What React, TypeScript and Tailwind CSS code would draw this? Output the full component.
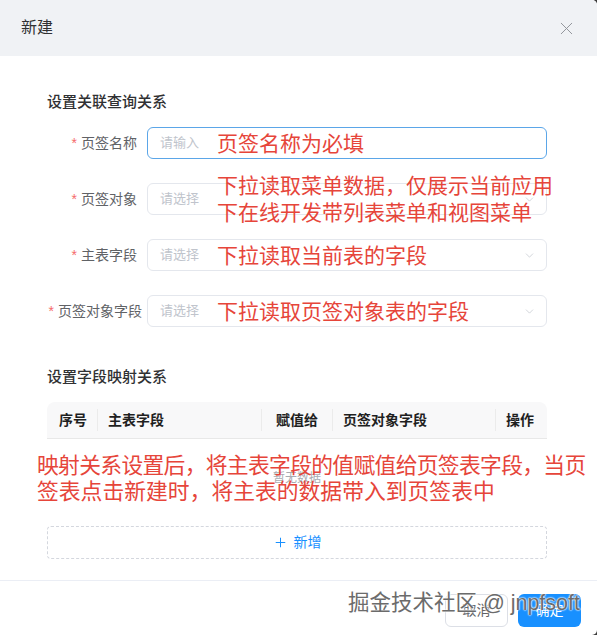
import { ChevronDown, Plus, X } from "lucide-react";

const rows = [
  { label: "页签名称", placeholder: "请输入", select: false, focus: true, note: ["页签名称为必填"] },
  {
    label: "页签对象",
    placeholder: "请选择",
    select: true,
    note: ["下拉读取菜单数据，仅展示当前应用", "下在线开发带列表菜单和视图菜单"],
  },
  { label: "主表字段", placeholder: "请选择", select: true, note: ["下拉读取当前表的字段"] },
  { label: "页签对象字段", placeholder: "请选择", select: true, note: ["下拉读取页签对象表的字段"] },
];

function FormRow({ row }: { row: (typeof rows)[number] }) {
  const long = row.label.length > 4;
  return (
    <div className="flex h-[32px] items-center">
      <div
        className={
          "flex w-[100px] shrink-0 items-center justify-end gap-[4px] whitespace-nowrap text-[14px] text-[#606266] " +
          (long ? "pr-[5px]" : "pr-[10px]")
        }
      >
        <span className="text-[#f56c6c]">*</span>
        <span>{row.label}</span>
      </div>
      <div
        className={
          "relative flex h-[32px] flex-1 items-center rounded-[6px] border pl-[12px] pr-[10px] " +
          (row.focus ? "border-[#5ba6e8]" : "border-[#e4e7ed]")
        }
      >
        <span className="flex-1 text-[13px] text-[#c0c4cc]">{row.placeholder}</span>
        {row.select && <ChevronDown size={13} strokeWidth={1.3} className="text-[#c0c4cc]" />}
        <div className="absolute left-[69px] top-1/2 -translate-y-1/2 text-[21px] leading-[27px] whitespace-nowrap text-[#e6453a]">
          {row.note.map((n) => (
            <div key={n}>{n}</div>
          ))}
        </div>
      </div>
    </div>
  );
}

export default function App() {
  return (
    <div className="relative h-[635px] w-[597px] bg-[#3c3c3c] font-['Liberation_Sans','Noto_Sans_CJK_SC',sans-serif]">
      <div className="flex h-full flex-col overflow-hidden rounded-tr-[5px] rounded-br-[5px] bg-white">
        {/* header */}
        <div className="flex h-[56px] shrink-0 items-center justify-between bg-[#f0f2f5] pl-[21px] pr-[20px]">
          <span className="text-[16px] text-[#303133]">新建</span>
          <X size={21} strokeWidth={1.1} className="text-[#909399]" />
        </div>

        {/* body */}
        <div className="flex-1 pl-[47px] pr-[50px] pt-[36px]">
          <div className="h-[20px] text-[15px] font-medium leading-[20px] text-[#303133]">设置关联查询关系</div>
          <div className="mt-[15px] flex flex-col gap-[24px]">
            {rows.map((r) => (
              <FormRow key={r.label} row={r} />
            ))}
          </div>

          <div className="mt-[40px] h-[20px] text-[15px] font-medium leading-[20px] text-[#303133]">设置字段映射关系</div>

          <div className="mt-[15px]">
            <div className="flex h-[37px] items-center rounded-t-[8px] border-b border-[#e8e8e8] bg-[#f8f8f9] text-[14px] font-semibold text-[#1f1f1f]">
              <div className="w-[50px] pl-[12px]">序号</div>
              <div className="h-[22px] w-px bg-[#ebebeb]" />
              <div className="w-[163px] pl-[10px]">主表字段</div>
              <div className="h-[22px] w-px bg-[#ebebeb]" />
              <div className="w-[70px] text-center">赋值给</div>
              <div className="h-[22px] w-px bg-[#ebebeb]" />
              <div className="w-[162px] pl-[10px]">页签对象字段</div>
              <div className="h-[22px] w-px bg-[#ebebeb]" />
              <div className="flex-1 pl-[10px]">操作</div>
            </div>
            <div className="relative flex h-[72px] items-center justify-center">
              <span className="mt-[6px] text-[12px] text-[#a8abb2]">暂无数据</span>
              <div className="absolute -left-[10px] top-[14px] whitespace-nowrap text-[21.8px] leading-[26px] text-[#e6453a]">
                <div className="tracking-[-0.7px]">映射关系设置后，将主表字段的值赋值给页签表字段，当页</div>
                <div>签表点击新建时，将主表的数据带入到页签表中</div>
              </div>
            </div>
          </div>

          <div className="mt-[15px] flex h-[33px] items-center justify-center gap-[6px] rounded-[4px] border border-dashed border-[#d4d7de] text-[14px] text-[#1890ff]">
            <Plus size={15} strokeWidth={1.6} />
            <span>新增</span>
          </div>
        </div>

        {/* footer */}
        <div className="flex h-[55px] shrink-0 items-start justify-end gap-[10px] border-t border-[#ebeef5] pr-[16px] pt-[13px]">
          <button className="h-[33px] w-[63px] rounded-[6px] border border-[#dcdfe6] bg-white text-[14px] text-[#606266]">
            取消
          </button>
          <button className="h-[33px] w-[63px] rounded-[6px] bg-[#1890ff] text-[14px] text-white">确定</button>
        </div>
      </div>

      <div className="pointer-events-none absolute bottom-[16px] right-[17px] text-[21.5px] text-[#6b6b6b] [text-shadow:0_0_2px_#fff,0_0_2px_#fff,0_0_1px_#fff]">
        掘金技术社区 @ jnpfsoft
      </div>
    </div>
  );
}
